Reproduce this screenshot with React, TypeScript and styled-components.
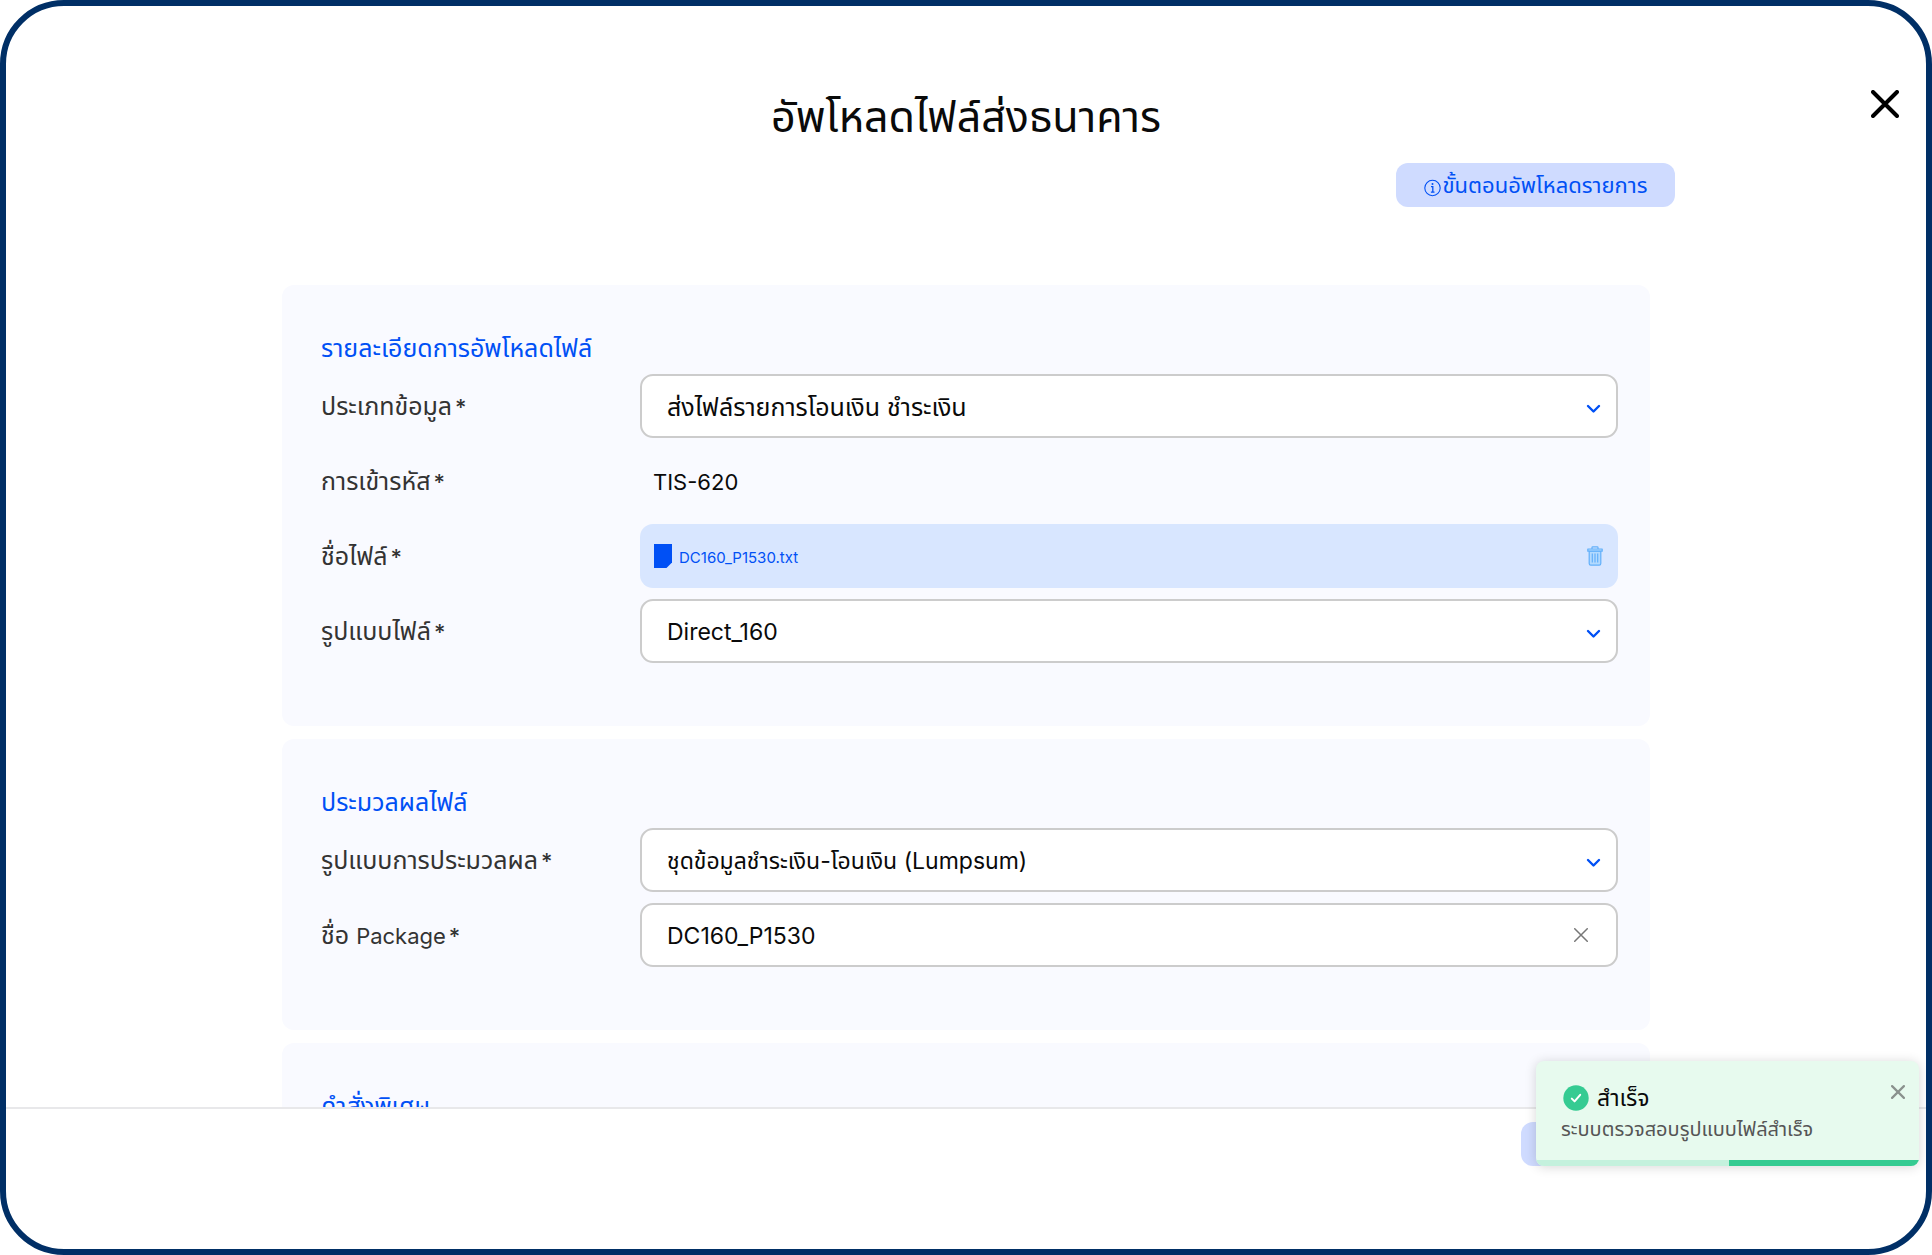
import React from "react";
import styled, { createGlobalStyle, css } from "styled-components";

const GlobalStyle = createGlobalStyle`
  *, *::before, *::after { box-sizing: border-box; }
  body { margin: 0; background: #fff; }
  body, button, input, select {
    font-family: Inter, "Noto Sans Thai", "Noto Sans", "DejaVu Sans", sans-serif;
  }
  button { border: 0; padding: 0; background: none; cursor: pointer; }
`;

const blue = "#0050f5";

const Frame = styled.div`
  position: relative;
  display: flex;
  flex-direction: column;
  height: 100vh;
  border: 6px solid #002f66;
  border-radius: 64px;
  background: #fff;
  overflow: hidden;
`;

const Header = styled.header`
  display: grid;
  grid-template-columns: 1fr auto 1fr;
  align-items: start;
  padding: 78px 24px 0;
`;

const Title = styled.h1`
  grid-column: 2;
  margin: 0;
  padding: 4px 0;
  font-size: 43px;
  font-weight: 400;
  line-height: 56px;
  color: #0a0a0a;
`;

const CloseButton = styled.button`
  justify-self: end;
  display: flex;
  width: 34px;
  height: 40px;
  align-items: center;
  justify-content: center;
`;

const Actions = styled.div`
  display: flex;
  width: 100%;
  max-width: 1418px;
  margin: 15px auto 0;
  justify-content: flex-end;
`;

const pill = css`
  height: 44px;
  border-radius: 12px;
  background: #cfdbff;
  color: ${blue};
  font-size: 22px;
`;

const GuideButton = styled.button`
  ${pill}
  display: flex;
  width: 279px;
  padding-top: 2px;
  align-items: center;
  justify-content: center;
  gap: 2px;
  svg { margin-top: 3px; }
`;

const Scroll = styled.main`
  flex: 1;
  min-height: 0;
  margin-top: 78px;
  overflow: hidden;
`;

const Cards = styled.form`
  display: flex;
  flex-direction: column;
  gap: 13px;
  max-width: 1368px;
  margin: 0 auto;
`;

const Card = styled.section`
  padding: 45px 32px 63px 39px;
  border-radius: 12px;
  background: #f9faff;
`;

const CardTitle = styled.h2`
  margin: 0 0 8px;
  font-size: 25px;
  font-weight: 400;
  line-height: 36px;
  color: ${blue};
`;

const Rows = styled.div`
  display: grid;
  gap: 11px;
`;

const Row = styled.div`
  display: grid;
  grid-template-columns: 319px 1fr;
  min-height: 64px;
  align-items: center;
`;

const Label = styled.label`
  font-size: 25px;
  line-height: 32px;
  color: #333;
`;

const Latin = styled.span`
  font-size: 22px;
`;

const Star = styled.span`
  margin-left: 3px;
  font-size: 22px;
  font-weight: 500;
`;

const Field = styled.div`
  display: grid;
  align-items: center;
  > * { grid-area: 1 / 1; }
  > svg, > button { justify-self: end; }
  > svg { margin-right: 17px; margin-top: 5px; pointer-events: none; }
  > button { margin-right: 30px; }
`;

const control = css<{ $size: number }>`
  width: 100%;
  height: 64px;
  padding: 2px 25px 0;
  border: 2px solid #cccccc;
  border-radius: 13px;
  background: #fff;
  color: #0a0a0a;
  font-size: ${(p) => p.$size}px;
  font-weight: 400;
`;

const Select = styled.select<{ $size: number }>`
  ${control}
  appearance: none;
`;

const Input = styled.input<{ $size: number }>`
  ${control}
`;

const Output = styled.output`
  padding: 2px 0 0 13px;
  font-size: 22px;
  color: #0a0a0a;
`;

const FileBar = styled.div`
  display: flex;
  height: 64px;
  align-items: center;
  gap: 7px;
  padding: 0 15px 0 14px;
  border-radius: 13px;
  background: #d8e6ff;
  color: ${blue};
  font-size: 15px;
`;

const FileName = styled.span`
  flex: 1;
  padding-top: 2px;
`;

const IconButton = styled.button`
  display: flex;
`;

const Footer = styled.footer`
  display: flex;
  height: 142px;
  padding: 13px 275px 0 0;
  justify-content: flex-end;
  border-top: 2px solid #e8e8ea;
`;

const NextButton = styled.button`
  ${pill}
  width: 130px;
`;

const Toast = styled.div`
  position: absolute;
  right: 7px;
  bottom: 83px;
  width: 383px;
  border-radius: 8px;
  background: #e7faee;
  box-shadow: 0 1px 12px rgba(0, 0, 0, 0.16);
  overflow: hidden;
`;

const ToastBody = styled.div`
  display: grid;
  grid-template-columns: 1fr auto;
  padding: 20px 14px 17px 25px;
`;

const ToastTitle = styled.strong`
  display: flex;
  align-items: center;
  gap: 8px;
  padding-left: 2px;
  font-size: 23px;
  font-weight: 400;
  line-height: 34px;
  color: #0a0a0a;
`;

const ToastText = styled.span`
  grid-column: 1 / -1;
  font-size: 20px;
  line-height: 28px;
  color: #555;
`;

const ToastClose = styled.button`
  display: flex;
  height: 22px;
  align-items: center;
`;

const Track = styled.div`
  display: flex;
  height: 6px;
  justify-content: flex-end;
  background: #c4f1dd;
`;

const Bar = styled.div`
  background: #35cb92;
`;

const Cross = ({ size, color, weight }: { size: number; color: string; weight: number }) => (
  <svg width={size} height={size} viewBox={`0 0 ${size} ${size}`} fill="none" stroke={color} strokeWidth={weight} strokeLinecap="round">
    <path d={`M${weight / 2} ${weight / 2}L${size - weight / 2} ${size - weight / 2}M${size - weight / 2} ${weight / 2}L${weight / 2} ${size - weight / 2}`} />
  </svg>
);

const Chevron = () => (
  <svg width="15" height="10" viewBox="0 0 15 10" fill="none" stroke={blue} strokeWidth="2.4" strokeLinecap="round" strokeLinejoin="round">
    <path d="M2 2l5.5 5.5L13 2" />
  </svg>
);

const InfoIcon = () => (
  <svg width="17" height="18" viewBox="0 0 17 18" fill="none" stroke={blue}>
    <circle cx="8.5" cy="9" r="7.7" strokeWidth="1.1" />
    <path d="M7 7.6h1.8v5.6M6.9 13.2h3.6" strokeWidth="1.3" />
    <circle cx="8.5" cy="5" r="1" fill={blue} stroke="none" />
  </svg>
);

const FileIcon = () => (
  <svg width="18" height="24" viewBox="0 0 18 24" fill={blue}>
    <path d="M0 0h18v18.5L12.5 24H0z" />
  </svg>
);

const TrashIcon = () => (
  <svg width="16" height="20" viewBox="0 0 16 20" fill="none" stroke="#62b0fa" strokeWidth="1.2" strokeLinejoin="round">
    <path fill="#b3dafe" d="M2.2 5.2h11.6v12.3a1.6 1.6 0 0 1-1.6 1.6H3.8a1.6 1.6 0 0 1-1.6-1.6z" />
    <path fill="#b3dafe" d="M.8 3h14.4v2.2H.8z" />
    <path d="M5 3V1.6a.8.8 0 0 1 .8-.8h4.4a.8.8 0 0 1 .8.8V3M5.3 7.6v9M8 7.6v9M10.7 7.6v9" />
  </svg>
);

const CheckIcon = () => (
  <svg width="26" height="26" viewBox="0 0 26 26" fill="none">
    <circle cx="13" cy="13" r="12.7" fill="#35cb92" />
    <path d="M8.8 13.6l2.8 2.8 5.6-6.6" stroke="#fff" strokeWidth="2" strokeLinecap="round" strokeLinejoin="round" />
  </svg>
);

function FormRow({ id, label, children }: { id: string; label: React.ReactNode; children: React.ReactNode }) {
  return (
    <Row>
      <Label htmlFor={id}>{label}<Star>*</Star></Label>
      {children}
    </Row>
  );
}

function SelectField({ id, value, size }: { id: string; value: string; size: number }) {
  return (
    <Field>
      <Select id={id} defaultValue={value} $size={size}><option>{value}</option></Select>
      <Chevron />
    </Field>
  );
}

export default function App() {
  const progress = 49.5;
  return (
    <Frame>
      <GlobalStyle />
      <Header>
        <Title>อัพโหลดไฟล์ส่งธนาคาร</Title>
        <CloseButton aria-label="ปิด"><Cross size={28} color="#000" weight={4} /></CloseButton>
      </Header>
      <Actions>
        <GuideButton><InfoIcon />ขั้นตอนอัพโหลดรายการ</GuideButton>
      </Actions>
      <Scroll>
        <Cards>
          <Card>
            <CardTitle>รายละเอียดการอัพโหลดไฟล์</CardTitle>
            <Rows>
              <FormRow id="type" label="ประเภทข้อมูล"><SelectField id="type" size={25} value="ส่งไฟล์รายการโอนเงิน ชำระเงิน" /></FormRow>
              <FormRow id="encoding" label="การเข้ารหัส"><Output id="encoding">TIS-620</Output></FormRow>
              <FormRow id="file" label="ชื่อไฟล์">
                <FileBar>
                  <FileIcon />
                  <FileName>DC160_P1530.txt</FileName>
                  <IconButton id="file" type="button" aria-label="ลบไฟล์"><TrashIcon /></IconButton>
                </FileBar>
              </FormRow>
              <FormRow id="format" label="รูปแบบไฟล์"><SelectField id="format" size={23} value="Direct_160" /></FormRow>
            </Rows>
          </Card>
          <Card>
            <CardTitle>ประมวลผลไฟล์</CardTitle>
            <Rows>
              <FormRow id="process" label="รูปแบบการประมวลผล"><SelectField id="process" size={23} value="ชุดข้อมูลชำระเงิน-โอนเงิน (Lumpsum)" /></FormRow>
              <FormRow id="package" label={<>ชื่อ <Latin>Package</Latin></>}>
                <Field>
                  <Input id="package" defaultValue="DC160_P1530" $size={23} />
                  <IconButton type="button" aria-label="ล้าง"><Cross size={14} color="#777" weight={1.5} /></IconButton>
                </Field>
              </FormRow>
            </Rows>
          </Card>
          <Card>
            <CardTitle>คำสั่งพิเศษ</CardTitle>
          </Card>
        </Cards>
      </Scroll>
      <Footer><NextButton aria-label="ถัดไป" /></Footer>
      <Toast role="status">
        <ToastBody>
          <ToastTitle><CheckIcon />สำเร็จ</ToastTitle>
          <ToastClose aria-label="ปิดการแจ้งเตือน"><Cross size={14} color="#8a918d" weight={2.2} /></ToastClose>
          <ToastText>ระบบตรวจสอบรูปแบบไฟล์สำเร็จ</ToastText>
        </ToastBody>
        <Track><Bar style={{ width: `${progress}%` }} /></Track>
      </Toast>
    </Frame>
  );
}
